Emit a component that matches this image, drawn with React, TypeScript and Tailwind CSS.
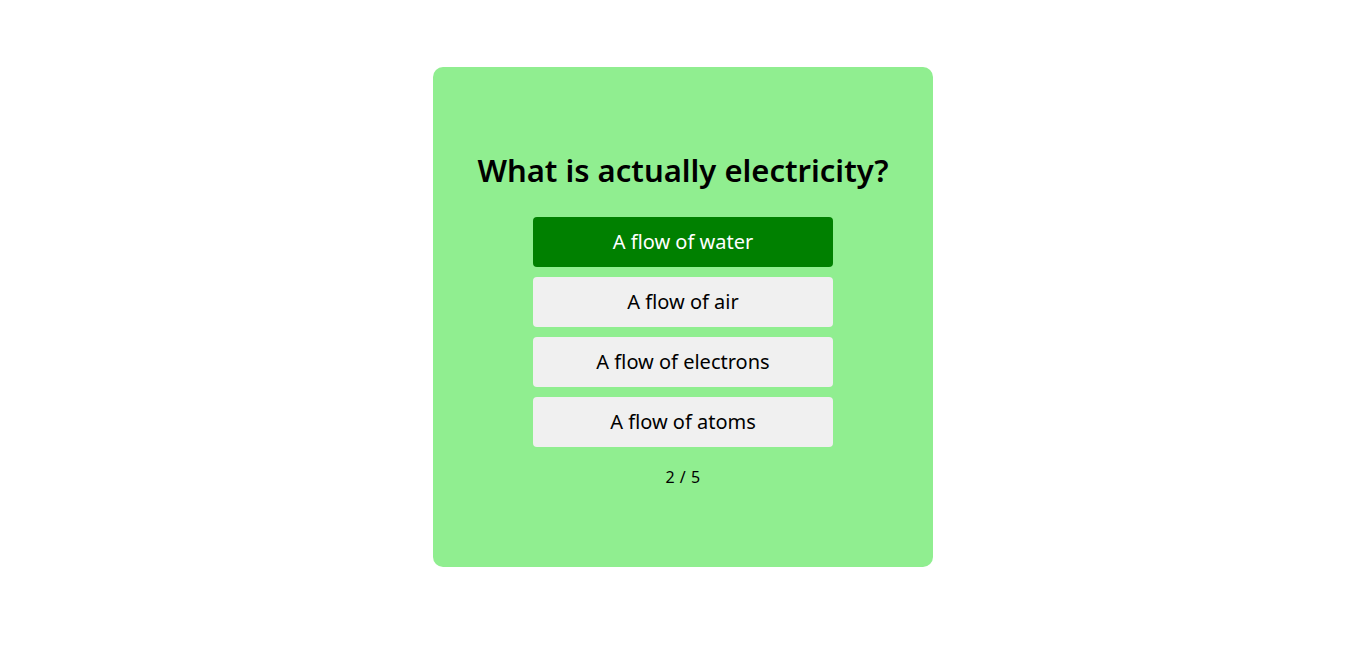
const options = [
  "A flow of water",
  "A flow of air",
  "A flow of electrons",
  "A flow of atoms",
];

const App = () => {
  const selected = 0;

  return (
    <div
      className="min-h-screen bg-white flex justify-center pt-[67px]"
      style={{ fontFamily: '"Noto Sans", "Open Sans", sans-serif' }}
    >
      {/* Quiz card */}
      <div className="w-[500px] h-[500px] bg-[#90ee90] rounded-[10px] flex flex-col items-center justify-center pt-[2px]">
        <h1 className="text-[31px] font-semibold text-black leading-[40px] mb-[27px]">
          What is actually electricity?
        </h1>

        <div className="flex flex-col gap-[10px]">
          {options.map((opt, i) => (
            <button
              key={opt}
              className={
                i === selected
                  ? "w-[300px] h-[50px] rounded-[4px] bg-[#008000] text-white text-[20px]"
                  : "w-[300px] h-[50px] rounded-[4px] bg-[#f0f0f0] text-black text-[20px]"
              }
            >
              {opt}
            </button>
          ))}
        </div>

        <p className="mt-[20px] text-[16px] text-black leading-[20px] tracking-[0.5px]">2 / 5</p>
      </div>
    </div>
  );
};

export default App;
